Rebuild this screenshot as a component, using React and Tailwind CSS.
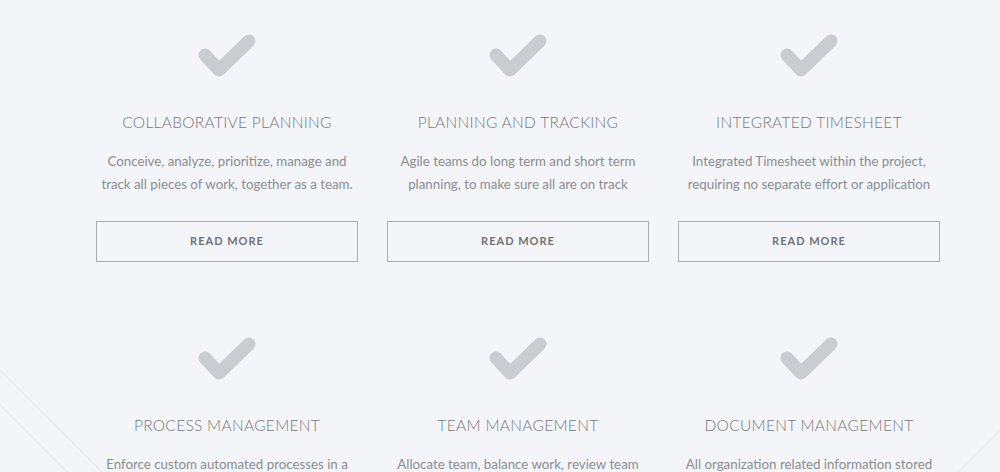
import React from "react";

const features = [
  {
    title: "COLLABORATIVE PLANNING",
    text: "Conceive, analyze, prioritize, manage and track all pieces of work, together as a team.",
  },
  {
    title: "PLANNING AND TRACKING",
    text: "Agile teams do long term and short term planning, to make sure all are on track",
  },
  {
    title: "INTEGRATED TIMESHEET",
    text: "Integrated Timesheet within the project, requiring no separate effort or application",
  },
  {
    title: "PROCESS MANAGEMENT",
    text: "Enforce custom automated processes in a structured way across the organization",
  },
  {
    title: "TEAM MANAGEMENT",
    text: "Allocate team, balance work, review team performance and keep track of progress",
  },
  {
    title: "DOCUMENT MANAGEMENT",
    text: "All organization related information stored at one place, easily accessible",
  },
];

const Check = () => (
  <svg width="62" height="50" viewBox="0 0 62 50" className="block">
    <polyline
      points="9,22 23,37 53,8"
      fill="none"
      stroke="#c9ccd0"
      strokeWidth="13"
      strokeLinecap="round"
      strokeLinejoin="round"
    />
  </svg>
);

const Feature = ({ title, text }) => (
  <div className="flex flex-col items-center text-center">
    <Check />
    <h3 className="mt-[29px] h-5 text-[15.5px] leading-5 font-light tracking-[0.3px] text-[#75787b]">
      {title}
    </h3>
    <p className="mt-[18px] h-[46px] px-[4px] text-[13.3px] leading-[23px] text-[#8a8d91]">{text}</p>
    <button className="mt-[25px] h-[41px] w-full border border-[#a9adb2] text-[11px] font-bold tracking-[1px] text-[#6f7275]">
      READ MORE
    </button>
  </div>
);

export default function App() {
  return (
    <div className="relative h-[472px] w-[1000px] overflow-hidden bg-[#f3f5f8] font-['Lato',sans-serif]">
      <svg className="pointer-events-none absolute inset-0" width="1000" height="472">
        <line x1="-10" y1="360" x2="110" y2="480" stroke="#e6e9ee" strokeWidth="1.5" />
        <line x1="-10" y1="395" x2="75" y2="480" stroke="#e8ebef" strokeWidth="1.5" />
        <line x1="950" y1="480" x2="1010" y2="420" stroke="#e8ebef" strokeWidth="1.5" />
      </svg>
      <div className="relative ml-[96px] grid w-[844px] grid-cols-3 gap-x-[29px] gap-y-[74px] pt-[33px]">
        {features.map((f) => (
          <Feature key={f.title} {...f} />
        ))}
      </div>
    </div>
  );
}
